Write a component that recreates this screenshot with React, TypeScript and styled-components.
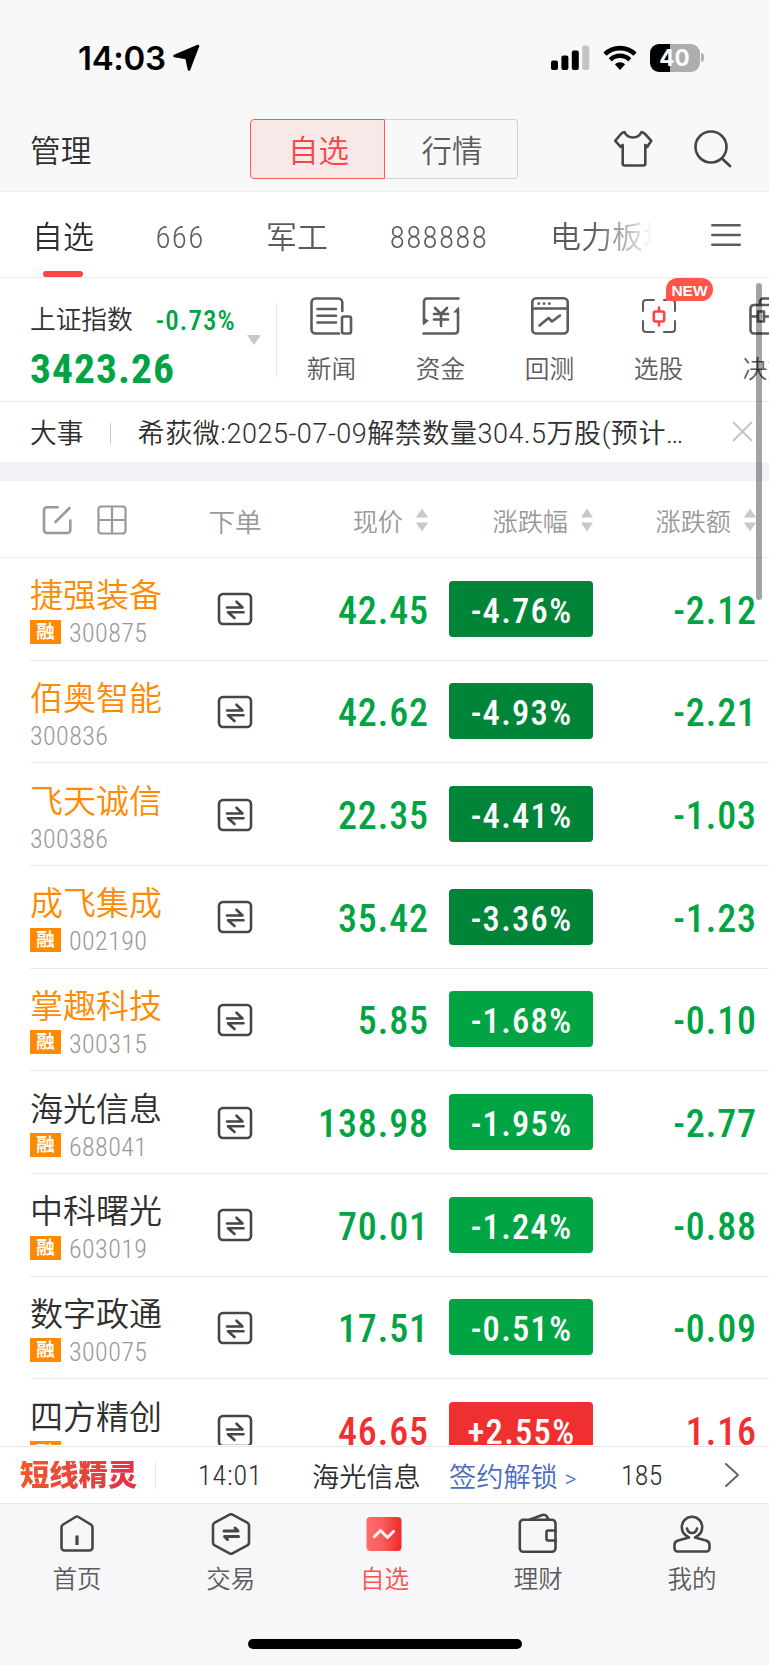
import type { ReactNode } from "react";
import styled, { createGlobalStyle } from "styled-components";

type Stock = {
  name: string;
  code: string;
  margin: boolean;
  starred: boolean;
  price: string;
  percent: string;
  change: string;
};

const stocks: Stock[] = [
  { name: "捷强装备", code: "300875", margin: true, starred: true, price: "42.45", percent: "-4.76%", change: "-2.12" },
  { name: "佰奥智能", code: "300836", margin: false, starred: true, price: "42.62", percent: "-4.93%", change: "-2.21" },
  { name: "飞天诚信", code: "300386", margin: false, starred: true, price: "22.35", percent: "-4.41%", change: "-1.03" },
  { name: "成飞集成", code: "002190", margin: true, starred: true, price: "35.42", percent: "-3.36%", change: "-1.23" },
  { name: "掌趣科技", code: "300315", margin: true, starred: true, price: "5.85", percent: "-1.68%", change: "-0.10" },
  { name: "海光信息", code: "688041", margin: true, starred: false, price: "138.98", percent: "-1.95%", change: "-2.77" },
  { name: "中科曙光", code: "603019", margin: true, starred: false, price: "70.01", percent: "-1.24%", change: "-0.88" },
  { name: "数字政通", code: "300075", margin: true, starred: false, price: "17.51", percent: "-0.51%", change: "-0.09" },
  { name: "四方精创", code: "300468", margin: true, starred: false, price: "46.65", percent: "+2.55%", change: "1.16" },
];

const RED = "#f03030";
const GREEN = "#00a443";
const DARK_GREEN = "#008437";

const trendColor = (percent: string) => (percent.startsWith("+") ? RED : GREEN);

// big drops get the darker green
const pillColor = (percent: string) => {
  const value = parseFloat(percent);
  if (value > 0) return RED;
  return value < -3 ? DARK_GREEN : GREEN;
};

const NewsIcon = () => (
  <Icon width="43" height="38" viewBox="0 0 43 38">
    <path d="M32.3 14V5.5a4 4 0 0 0-4-4H5.500a4 4 0 0 0-4 4v27a4 4 0 0 0 4 4H29" />
    <path d="M7.500 12h18.500M7.500 18.700h18.500M7.500 25.500h18.500" />
    <rect x="32" y="19.500" width="9" height="17" rx="2" />
  </Icon>
);

const FundIcon = () => (
  <Icon width="38" height="38" viewBox="0 0 38 38">
    <path d="M36.500 1.500H5a3 3 0 0 0-3 3V26M1.500 36.500H33a3 3 0 0 0 3-3V12" />
    <path d="M2 21l5 2.500L1 28.500zM37 9.500v6h-6z" fill="#5c5c5c" stroke="none" />
    <path d="M13 11l6 6 6-6M19 17v12M12 17h14M12 22.500h14" />
  </Icon>
);

const BacktestIcon = () => (
  <Icon width="38" height="38" viewBox="0 0 38 38">
    <rect x="1.300" y="1.300" width="35.400" height="35.200" rx="4" />
    <path d="M1.500 11.500h35M8.500 28.500l9-7.500 3.500 3.500 8-6" />
    <path d="M7.800 6.600h.1M13 6.600h.1M18.200 6.600h.1" strokeWidth="2.800" />
  </Icon>
);

const PickIcon = () => (
  <Icon width="38" height="38" viewBox="0 0 38 38">
    <path d="M14 3H6a3 3 0 0 0-3 3v8M24 3h8a3 3 0 0 1 3 3v8M3 24v8a3 3 0 0 0 3 3h8M24 35h8a3 3 0 0 0 3-3v-8" strokeWidth="2" />
    <path d="M19 10.500v4M19 24.500v4M15.800 14.500h6.400a2 2 0 0 1 2 2v6a2 2 0 0 1-2 2h-6.400a2 2 0 0 1-2-2v-6a2 2 0 0 1 2-2z" stroke="#fb4444" />
  </Icon>
);

const DecisionIcon = () => (
  <Icon width="38" height="38" viewBox="0 0 38 38">
    <path d="M5 8h28a3.500 3.500 0 0 1 3.500 3.500V33a3.500 3.500 0 0 1-3.500 3.500H5A3.500 3.500 0 0 1 1.500 33V11.500A3.500 3.500 0 0 1 5 8zM11 8V4.500A3 3 0 0 1 14 1.500h10a3 3 0 0 1 3 3V8M2 19.500h6M14.500 19.500H36M9 14.500h6v10H9z" />
  </Icon>
);

const TradeIcon = () => (
  <Icon width="36" height="34" viewBox="0 0 36 34" stroke="#464646">
    <rect x="2" y="2" width="32" height="30" rx="4" />
    <path d="M10 15.500h15.500L19.500 9.700M26.500 20.300H11l6.500 5.700" />
  </Icon>
);

const SortIcon = () => (
  <svg width="12" height="24" viewBox="0 0 12 24" fill="#c8c8c8">
    <path d="M6 .5l6 9H0zM6 23.500l6-9H0z" />
  </svg>
);

const HomeIcon = () => (
  <Icon width="42" height="42" viewBox="0 0 42 42" stroke="#464646">
    <path d="M5.500 14.500q0-2 1.700-3L19.500 4q1.500-.9 3 0l12.300 7.500q1.700 1 1.700 3v20a3 3 0 0 1-3 3h-25a3 3 0 0 1-3-3z" />
    <path d="M21 22.500v9.500" strokeWidth="3.200" strokeLinecap="butt" />
  </Icon>
);

const ExchangeIcon = () => (
  <Icon width="42" height="42" viewBox="0 0 42 42" stroke="#464646">
    <path d="M19.500 1.700q1.500-.9 3 0l14.800 7.900q1.700 1 1.700 3v16.800q0 2-1.700 3l-14.800 7.900q-1.500.9-3 0L4.700 32.400q-1.700-1-1.700-3V12.600q0-2 1.700-3z" />
    <path d="M14 18h14l-3-3M28.500 23.500H14.500l3 3" strokeWidth="3" />
  </Icon>
);

const WatchIcon = () => (
  <Icon width="42" height="42" viewBox="0 0 42 42">
    <defs>
      <linearGradient id="watch">
        <stop offset="0" stopColor="#fe6b6b" />
        <stop offset=".45" stopColor="#fb5c5e" />
        <stop offset="1" stopColor="#ed2929" />
      </linearGradient>
    </defs>
    <rect x="3.500" y="4" width="35" height="34" rx="4" fill="url(#watch)" stroke="none" />
    <path d="M10.500 24.500l7-7 7 7 7-7" stroke="#fff" strokeWidth="2.800" strokeLinecap="butt" />
  </Icon>
);

const WalletIcon = () => (
  <Icon width="42" height="42" viewBox="0 0 42 42" stroke="#464646">
    <rect x="2.800" y="6.800" width="35.700" height="32" rx="3.500" />
    <path d="M13 6.500L25.500 2q2.500-.8 4 1l2 3.500M38.500 17.500H31a1.500 1.500 0 0 0-1.500 1.500v7a1.500 1.500 0 0 0 1.500 1.500h7.500" />
  </Icon>
);

const ProfileIcon = () => (
  <Icon width="42" height="42" viewBox="0 0 42 42" stroke="#464646">
    <path d="M18 24.500l-11 3q-3.500 1-3.500 4.500v3.500a3 3 0 0 0 3 3h29a3 3 0 0 0 3-3V32q0-3.500-3.500-4.500l-11-3" />
    <path d="M17.500 24.200C13 22 10.800 18.500 10.800 14a10.200 10.200 0 0 1 20.400 0c0 4.500-2.200 8-6.700 10.200" />
    <path d="M16 15.500q1 4.500 5 4.500t5-4.500" />
  </Icon>
);

const tools: { label: string; icon: ReactNode; isNew?: boolean }[] = [
  { label: "新闻", icon: <NewsIcon /> },
  { label: "资金", icon: <FundIcon /> },
  { label: "回测", icon: <BacktestIcon /> },
  { label: "选股", icon: <PickIcon />, isNew: true },
  { label: "决策", icon: <DecisionIcon /> },
];

const navItems: { label: string; icon: ReactNode; active?: boolean }[] = [
  { label: "首页", icon: <HomeIcon /> },
  { label: "交易", icon: <ExchangeIcon /> },
  { label: "自选", icon: <WatchIcon />, active: true },
  { label: "理财", icon: <WalletIcon /> },
  { label: "我的", icon: <ProfileIcon /> },
];

const StatusBar = () => (
  <StatusBarContainer>
    <Clock>14:03</Clock>
    <svg width="28" height="28" viewBox="0 0 28 28">
      <path d="M26 2L17 25.500 14.500 14 2.500 12z" fill="#000" stroke="#000" strokeWidth="2.600" strokeLinejoin="round" />
    </svg>
    <StatusIcons>
      <svg width="39" height="26" viewBox="0 0 39 26">
        <rect x="0" y="15.500" width="7" height="9.500" rx="2" />
        <rect x="10.400" y="10.500" width="7" height="14.500" rx="2" />
        <rect x="20.800" y="5.500" width="7" height="19.500" rx="2" />
        <rect x="31.200" y=".5" width="7" height="24.500" rx="2" fill="#c4c4c4" />
      </svg>
      <svg width="34" height="26" viewBox="0 0 34 26" fill="none" stroke="#000" strokeWidth="4.600">
        <path d="M2 9.200a21.500 21.500 0 0 1 30 0" />
        <path d="M7.300 14.800a13.800 13.800 0 0 1 19.400 0" />
        <path d="M11.800 19.300a7.400 7.400 0 0 1 10.400 0L17 25z" fill="#000" stroke="none" />
      </svg>
      <Battery>
        <BatteryBody>40</BatteryBody>
        <BatteryTip />
      </Battery>
    </StatusIcons>
  </StatusBarContainer>
);

const StockRow = ({ stock }: { stock: Stock }) => (
  <Row>
    <NameCell>
      <StockName $starred={stock.starred}>{stock.name}</StockName>
      <CodeLine>
        {stock.margin && <MarginTag>融</MarginTag>}
        <Code>{stock.code}</Code>
      </CodeLine>
    </NameCell>
    <OrderCell>
      <TradeIcon />
    </OrderCell>
    <Figure $color={trendColor(stock.percent)}>{stock.price}</Figure>
    <Pill $color={pillColor(stock.percent)}>{stock.percent}</Pill>
    <Figure $color={trendColor(stock.percent)}>{stock.change}</Figure>
  </Row>
);

const App = () => {
  return (
    <>
      <GlobalStyle />
      <Screen>
        <StatusBar />
        <TopBar>
          <Manage>管理</Manage>
          <Segment>
            <SegmentItem $active>自选</SegmentItem>
            <SegmentItem>行情</SegmentItem>
          </Segment>
          <TopIcons>
            <Icon width="40" height="38" viewBox="0 0 40 38" stroke="#464646">
              <path d="M11.500 2q-2.500.5-4 2.500L2.200 10.800l5.500 6 2-1.800v18.500a2 2 0 0 0 2 2h18.600a2 2 0 0 0 2-2V15l2 1.800 4-6L32.500 4.500q-1.500-2-4-2.500Q26 7.500 20 7.500T11.500 2z" />
            </Icon>
            <Icon width="40" height="40" viewBox="0 0 40 40" stroke="#464646">
              <circle cx="18" cy="18" r="15.500" />
              <path d="M29 29.500l8 7.500" strokeWidth="2.700" />
            </Icon>
          </TopIcons>
        </TopBar>

        <GroupTabs>
          <GroupList>
            <GroupTab $width={60} $active>自选</GroupTab>
            <GroupTab $width={50}>666</GroupTab>
            <GroupTab $width={60}>军工</GroupTab>
            <GroupTab $width={100}>888888</GroupTab>
            <GroupTab $width={122}>电力板块</GroupTab>
          </GroupList>
          <Icon width="30" height="24" viewBox="0 0 30 24">
            <path d="M1.300 2.300h27.400M1.300 12h27.400M1.300 21.700h27.400" />
          </Icon>
        </GroupTabs>

        <MarketBar>
          <IndexCard>
            <IndexTop>
              <span>上证指数</span>
              <IndexPercent>-0.73%</IndexPercent>
            </IndexTop>
            <IndexValue>3423.26</IndexValue>
            <Caret />
          </IndexCard>
          <Tools>
            {tools.map((tool) => (
              <Tool key={tool.label}>
                {tool.icon}
                <ToolLabel>{tool.label}</ToolLabel>
                {tool.isNew && <NewBadge>NEW</NewBadge>}
              </Tool>
            ))}
          </Tools>
        </MarketBar>

        <NewsBar>
          <span>大事</span>
          <NewsDivider />
          <NewsText>希荻微:2025-07-09解禁数量304.5万股(预计…</NewsText>
          <Icon width="21" height="21" viewBox="0 0 21 21" stroke="#c4c4c4" strokeWidth="2">
            <path d="M1.500 1.500l18 18M19.500 1.500l-18 18" />
          </Icon>
        </NewsBar>

        <TableHead>
          <HeadIcons>
            <Icon width="30" height="30" viewBox="0 0 30 30" stroke="#999">
              <path d="M15.500 2.200H5a3 3 0 0 0-3 3V25a3 3 0 0 0 3 3h20.300a3 3 0 0 0 3-3v-9.500M13.500 17L27.500 3" />
            </Icon>
            <Icon width="30" height="30" viewBox="0 0 30 30" stroke="#999" strokeWidth="2.200">
              <rect x="1.500" y="1.500" width="27" height="27" rx="3" />
              <path d="M15 2v26M2 15h26" />
            </Icon>
          </HeadIcons>
          <HeadOrder>下单</HeadOrder>
          <HeadCell>现价<SortIcon /></HeadCell>
          <HeadCell>涨跌幅<SortIcon /></HeadCell>
          <HeadCell>涨跌额<SortIcon /></HeadCell>
        </TableHead>

        <StockList>
          {stocks.map((stock) => (
            <StockRow key={stock.code} stock={stock} />
          ))}
        </StockList>

        <Ticker>
          <TickerLogo>短线精灵</TickerLogo>
          <TickerTime>14:01</TickerTime>
          <TickerName>海光信息</TickerName>
          <TickerLink>签约解锁 <small>&gt;</small></TickerLink>
          <TickerCount>185</TickerCount>
          <Icon width="16" height="26" viewBox="0 0 16 26" strokeWidth="2" stroke="#666">
            <path d="M2 2l12 11L2 24" />
          </Icon>
        </Ticker>

        <BottomNav>
          {navItems.map((item) => (
            <NavItem key={item.label} $active={item.active}>
              {item.icon}
              {item.label}
            </NavItem>
          ))}
        </BottomNav>
        <HomeIndicator />
        <ScrollThumb />
      </Screen>
    </>
  );
};

export default App;

const numberFont = `"Roboto Condensed", Roboto, "Noto Sans CJK SC", sans-serif`;

const GlobalStyle = createGlobalStyle`
  * {
    box-sizing: border-box;
  }

  body {
    margin: 0;
    background: #f7f7fa;
  }

  svg {
    display: block;
    flex: none;
  }
`;

const Screen = styled.div`
  position: relative;
  display: flex;
  flex-direction: column;
  width: 769px;
  height: 1665px;
  overflow: hidden;
  background: #fff;
  color: #2f2f2f;
  font-family: Roboto, "Noto Sans CJK SC", sans-serif;
  font-weight: 350;
  white-space: nowrap;
`;

const Icon = styled.svg.attrs((props) => ({
  fill: "none",
  stroke: props.stroke ?? "#5c5c5c",
  strokeWidth: props.strokeWidth ?? 2.6,
  strokeLinecap: "round" as const,
  strokeLinejoin: "round" as const,
}))``;

const StatusBarContainer = styled.div`
  display: flex;
  align-items: center;
  height: 106px;
  padding: 9px 65px 0 78px;
  background: #f8f8f8;
`;

const Clock = styled.div`
  width: 94px;
  font-family: Inter, sans-serif;
  font-size: 33px;
  font-weight: 600;
  letter-spacing: -.3px;
  color: #000;
`;

const StatusIcons = styled.div`
  display: flex;
  align-items: center;
  gap: 13px;
  margin-left: auto;
`;

const Battery = styled.div`
  display: flex;
  align-items: center;
  gap: 1.500px;
`;

const BatteryBody = styled.div`
  width: 50px;
  height: 28px;
  border-radius: 9px;
  background: linear-gradient(90deg, #000 41%, #adadad 41%);
  color: #fff;
  font: 700 22.500px/28px Inter, sans-serif;
  text-align: center;
`;

const BatteryTip = styled.div`
  width: 3px;
  height: 9px;
  border-radius: 0 4px 4px 0;
  background: #b4b4b4;
`;

const TopBar = styled.div`
  display: flex;
  align-items: center;
  height: 86px;
  padding: 0 36px 0 30px;
  background: #f8f8f8;
  border-bottom: 1px solid #f1f1f1;
`;

const Manage = styled.div`
  width: 220px;
  font-size: 30.700px;
  line-height: 40px;
  padding-top: 6px;
`;

const Segment = styled.div`
  display: flex;
  width: 268px;
  height: 60px;
`;

const SegmentItem = styled.div<{ $active?: boolean }>`
  flex: ${(p) => (p.$active ? "0 0 135px" : "1")};
  height: 60px;
  padding-top: 3px;
  padding-left: 2px;
  border: 1.500px solid ${(p) => (p.$active ? "#fb5d5d" : "#d2d2d2")};
  border-left-width: ${(p) => (p.$active ? "1.500px" : "0")};
  border-radius: ${(p) => (p.$active ? "4px 0 0 4px" : "0 4px 4px 0")};
  background: ${(p) => (p.$active ? "#f9e8e8" : "transparent")};
  color: ${(p) => (p.$active ? "#fb4444" : "#5c5c5c")};
  font-size: 30.500px;
  line-height: 58px;
  text-align: center;
`;

const TopIcons = styled.div`
  display: flex;
  align-items: center;
  gap: 40px;
  margin-left: auto;
`;

const GroupTabs = styled.div`
  display: flex;
  justify-content: space-between;
  align-items: center;
  flex: none;
  height: 86px;
  padding: 0 28px 0 32px;
  border-bottom: 1px solid #ececec;
`;

const GroupList = styled.div`
  display: flex;
  gap: 61px;
  width: 622px;
  height: 85px;
  overflow: hidden;
  mask-image: linear-gradient(90deg, #000 90%, transparent 100%);
`;

const GroupTab = styled.div<{ $width: number; $active?: boolean }>`
  display: flex;
  flex-direction: column;
  align-items: center;
  justify-content: space-between;
  flex: 0 0 ${(p) => p.$width}px;
  padding-top: 24px;
  color: ${(p) => (p.$active ? "#2f2f2f" : "#5c5c5c")};
  font-family: ${numberFont};
  font-size: 31px;
  letter-spacing: ${(p) => (p.$width % 50 ? 0 : 1.3)}px;
  line-height: 43px;

  &::after {
    content: "";
    width: 40px;
    height: 6px;
    border-radius: 3px;
    background: ${(p) => (p.$active ? "#fb4444" : "transparent")};
  }
`;

const MarketBar = styled.div`
  display: flex;
  align-items: center;
  flex: none;
  height: 124px;
  border-bottom: 1px solid #e8e8e8;
  overflow: hidden;
`;

const IndexCard = styled.div`
  position: relative;
  flex: 0 0 277px;
  height: 74px;
  padding-left: 30px;
  border-right: 1.500px solid #e8e8e8;
`;

const IndexTop = styled.div`
  display: flex;
  gap: 23px;
  font-size: 25.700px;
  line-height: 34px;
`;

const IndexPercent = styled.span`
  color: ${GREEN};
  font-family: ${numberFont};
  font-size: 27px;
  font-weight: 500;
  letter-spacing: 1.100px;
  padding-top: 1px;
`;

const IndexValue = styled.div`
  color: ${GREEN};
  font-family: ${numberFont};
  font-size: 41.500px;
  font-weight: 700;
  line-height: 62px;
  letter-spacing: 1px;
`;

const Caret = styled.div`
  position: absolute;
  right: 15px;
  top: 32px;
  border: 7.500px solid transparent;
  border-top: 10px solid #c8c8c8;
  border-bottom: 0;
`;

const Tools = styled.div`
  display: flex;
  height: 123px;
`;

const Tool = styled.div`
  position: relative;
  display: flex;
  flex-direction: column;
  align-items: center;
  flex: 0 0 109px;
  padding-top: 19px;
`;

const ToolLabel = styled.div`
  margin-top: 15px;
  color: #5c5c5c;
  font-size: 24.700px;
  line-height: 40px;
`;

const NewBadge = styled.div`
  position: absolute;
  left: 62px;
  top: 0;
  width: 47px;
  height: 23px;
  border-radius: 12px 12px 12px 0;
  background: #ff544c;
  color: #fff;
  font: 700 15.500px/25px "Liberation Sans", sans-serif;
  text-align: center;
`;

const NewsBar = styled.div`
  display: flex;
  align-items: center;
  flex: none;
  height: 79px;
  padding: 0 16px 2px 30px;
  border-bottom: 19px solid #f1f2f5;
  font-size: 26.800px;
`;

const NewsDivider = styled.div`
  width: 1px;
  height: 21px;
  margin: 5px 27px 0 26px;
  background: #ccc;
`;

const NewsText = styled.div`
  flex: 1;
  font-size: 27px;
  letter-spacing: .55px;
`;

const columns = `
  display: grid;
  grid-template-columns: 162px 86px 150px 165px 163px;
  align-items: center;
  flex: none;
`;

const TableHead = styled.div`
  ${columns}
  height: 77px;
  padding-left: 30px;
  border-bottom: 1px solid #ececec;
  color: #999;
  font-size: 25.200px;
`;

const HeadIcons = styled.div`
  display: flex;
  gap: 25px;
  padding: 1px 0 0 12px;
`;

const HeadOrder = styled.div`
  padding-top: 2px;
  font-size: 26.500px;
  text-align: center;
`;

const HeadCell = styled.div`
  display: flex;
  justify-content: flex-end;
  align-items: center;
  gap: 13px;
  padding-top: 1px;
`;

const StockList = styled.div`
  height: 887px;
  margin-bottom: 1px;
  flex: none;
  padding-left: 30px;
  overflow: hidden;
`;

const Row = styled.div`
  ${columns}
  height: 102.670px;
  border-bottom: 1.500px solid #ebebeb;
`;

const NameCell = styled.div`
  display: flex;
  flex-direction: column;
  padding-top: 7px;
`;

const StockName = styled.div<{ $starred: boolean }>`
  color: ${(p) => (p.$starred ? "#ff8a00" : "#2f2f2f")};
  font-size: 33px;
  line-height: 42px;
`;

const CodeLine = styled.div`
  display: flex;
  align-items: center;
  gap: 8px;
  height: 32px;
`;

const MarginTag = styled.div`
  width: 31px;
  height: 24px;
  margin-top: -3px;
  background: #ff8a00;
  color: #fff;
  font-size: 18.500px;
  font-weight: 700;
  line-height: 24px;
  text-align: center;
`;

const Code = styled.div`
  color: #999;
  font-family: ${numberFont};
  font-size: 26px;
  line-height: 32px;
  letter-spacing: .4px;
`;

const OrderCell = styled.div`
  display: flex;
  justify-content: center;
  padding-top: 1px;
`;

const Figure = styled.div<{ $color: string }>`
  margin-right: -1px;
  padding-top: 4px;
  color: ${(p) => p.$color};
  font-family: ${numberFont};
  font-size: 38px;
  font-weight: 500;
  letter-spacing: .9px;
  text-align: right;
`;

const Pill = styled.div<{ $color: string }>`
  justify-self: end;
  width: 144px;
  height: 56px;
  padding-left: 1px;
  border-radius: 4px;
  background: ${(p) => p.$color};
  color: #fff;
  font-family: ${numberFont};
  font-size: 34.500px;
  font-weight: 500;
  line-height: 61px;
  letter-spacing: 1.300px;
  text-align: center;
`;

const Ticker = styled.div`
  display: flex;
  align-items: center;
  flex: none;
  height: 58px;
  padding: 0 29px 0 20px;
  border-top: 1.500px solid #e8e8e8;
  border-bottom: 1.500px solid #ebebeb;
  font-size: 27.200px;
`;

const TickerLogo = styled.div`
  width: 136px;
  border-right: 1.500px solid #e8e8e8;
  background: linear-gradient(100deg, #f0592a, #e0304e 90%) text;
  color: transparent;
  font-size: 29.300px;
  font-weight: 900;
  line-height: 28px;
`;

const TickerTime = styled.div`
  width: 156px;
  padding-left: 42px;
  font-family: ${numberFont};
  font-size: 28px;
  letter-spacing: .9px;
`;

const TickerName = styled.div`
  width: 137px;
`;

const TickerLink = styled.div`
  width: 172px;
  color: #4a6dbd;

  small {
    font-size: 23px;
  }
`;

const TickerCount = styled.div`
  flex: 1;
  font-family: ${numberFont};
  font-size: 28px;
  letter-spacing: .2px;
`;

const BottomNav = styled.div`
  display: flex;
  flex: none;
  height: 135px;
  padding-top: 9px;
  background: #f7f7fa;
`;

const NavItem = styled.div<{ $active?: boolean }>`
  display: flex;
  flex-direction: column;
  align-items: center;
  gap: 7px;
  flex: 1;
  color: ${(p) => (p.$active ? "#fb5050" : "#5c5c5c")};
  font-size: 24.500px;
  line-height: 36px;
`;

const HomeIndicator = styled.div`
  flex: none;
  height: 26px;
  background: #f7f7fa;

  &::before {
    content: "";
    display: block;
    width: 274px;
    height: 10px;
    margin: 0 auto;
    border-radius: 5px;
    background: #000;
  }
`;

const ScrollThumb = styled.div`
  position: absolute;
  right: 7px;
  top: 283px;
  width: 6px;
  height: 317px;
  border-radius: 3px;
  background: rgba(0, 0, 0, .36);
`;
